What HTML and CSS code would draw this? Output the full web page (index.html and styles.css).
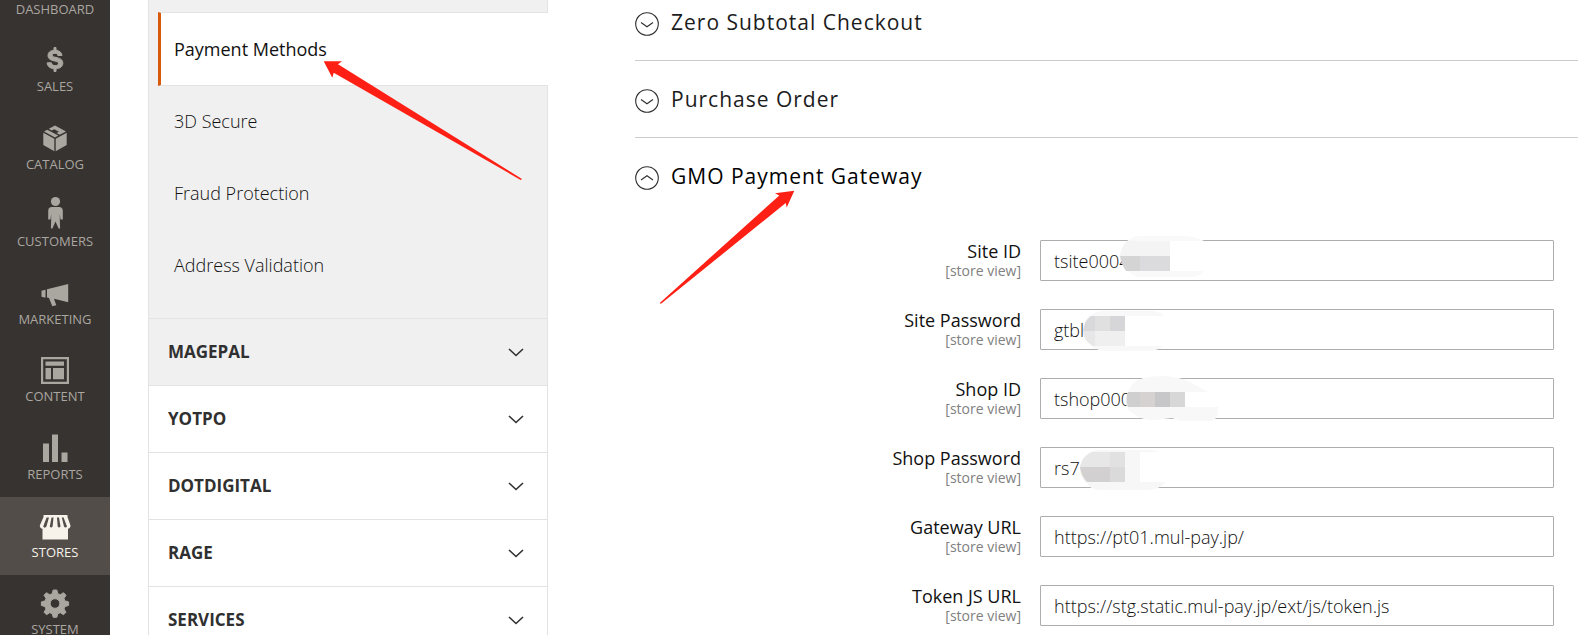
FILE: index.html
```html
<!DOCTYPE html>
<html lang="en">
<head>
<meta charset="utf-8">
<title>Payment Methods Configuration</title>
<link rel="stylesheet" href="styles.css">
</head>
<body>
<div class="page">
  <nav class="menu" aria-label="Main menu">
    <a class="menu-item menu-item-first" href="#"><span>DASHBOARD</span></a>
    <a class="menu-item" href="#">
      <svg class="icon" viewBox="0 0 32 32"><path stroke="currentColor" stroke-width="1" d="M15 3.500h2v2.700c3.600.5 5.800 2.500 6 5.300h-4.200c-.2-1.400-1.200-2.200-2.800-2.200-1.700 0-2.700.7-2.700 1.900 0 1.400 1.400 1.700 3.700 2.200 3.700.8 6.800 1.900 6.800 5.700 0 3.200-2.400 5.300-6.800 5.700v2.700h-2v-2.700c-4.200-.4-6.600-2.600-6.800-6h4.200c.2 1.800 1.500 2.800 3.700 2.800 2 0 3.300-.8 3.300-2.200 0-1.500-1.600-1.900-3.800-2.400C12 16.200 9 15.100 9 11.500c0-3 2.200-4.900 6-5.300z"/></svg>
      <span>SALES</span></a>
    <a class="menu-item" href="#">
      <svg class="icon" viewBox="0 0 32 32"><path d="M4.300 10.800L15.300 16.800V29.300L4.300 23zM16.700 16.800L27.700 10.800V23L16.700 29.300zM5 9.500L8.300 7.700L19.300 13.600L16 15.400zM9.800 6.800L16 3.500L27 9.500L20.800 12.700L17.500 11L20 9.700L15.200 7.200L12.700 8.500z"/></svg>
      <span>CATALOG</span></a>
    <a class="menu-item" href="#">
      <svg class="icon" viewBox="0 0 32 32"><circle cx="16.500" cy="2.500" r="4.600"/><path d="M13 8h7c2.500 0 3.800 1.500 3.800 4v8.500h-2.300L20.800 15v5l.3 9.500h-1.500L16.500 22.500 13.400 29.500h-1.500l.3-9.500v-5l-.7 5.500H9.200V12c0-2.500 1.300-4 3.800-4z"/></svg>
      <span>CUSTOMERS</span></a>
    <a class="menu-item" href="#">
      <svg class="icon" viewBox="0 0 32 32"><path d="M2.500 13.800l4-1v8l-4-1zM8 12.300L29.200 7v18.200L15 21.800l2.300 6.400-4 1.100L10 21 8 20.500z"/></svg>
      <span>MARKETING</span></a>
    <a class="menu-item" href="#">
      <svg class="icon" viewBox="0 0 32 32"><path fill-rule="evenodd" d="M2 3h28v27H2zM4.200 5.200v22.600h23.600V5.200z"/><path d="M6.500 7.500h18.500v4.200H6.500zM6.500 14H12v11.200H6.500zM14 14h11v11.200H14z"/></svg>
      <span>CONTENT</span></a>
    <a class="menu-item" href="#">
      <svg class="icon" viewBox="0 0 32 32"><path d="M4 11.500h6V30H4zM13 2.500h6V30h-6zM22.500 20.500h6V30h-6z"/></svg>
      <span>REPORTS</span></a>
    <a class="menu-item menu-item-active" href="#" aria-current="page">
      <svg class="icon" viewBox="0 0 32 32"><path fill-rule="evenodd" d="M4.500 6h24v2l3 8.500c0 2-1 3-2.500 3.200V30.500H3.500V19.700C1.800 19.500.8 18.500.8 16.500L4.500 8zM7.600 8.500L4.200 17.500c.8 1.500 2.400 1.500 3.200 0L10 8.500zM12.500 8.500L10.800 17.500c.8 1.300 2 1.300 2.800 0L14.500 8.500zM18 8.500l.7 9c.8 1.300 2 1.300 2.800 0l-1.500-9zM22.800 8.500l2.200 9c.8 1.300 2.200 1.300 3 0l-3.400-9z"/></svg>
      <span>STORES</span></a>
    <a class="menu-item" href="#">
      <svg class="icon" viewBox="0 0 32 32"><path fill-rule="evenodd" stroke="currentColor" stroke-linejoin="round" d="M14.200 3h3.600l1 3.700 2.500 1 3.200-2 2.500 2.500-2 3.200 1 2.500 3.600 1v3.600l-3.600 1-1 2.500 2 3.200-2.500 2.500-3.200-2-2.500 1-1 3.600h-3.600l-1-3.600-2.500-1-3.200 2L5 25.200l2-3.200-1-2.500-3.600-1v-3.600l3.600-1 1-2.500-2-3.200 2.500-2.500 3.200 2 2.500-1zM16 11.700a4.800 4.800 0 1 0 0 9.600a4.800 4.800 0 1 0 0-9.600z"/></svg>
      <span>SYSTEM</span></a>
  </nav>

  <aside class="config">
    <div class="config-open">
      <a class="config-link config-link-active" href="#">Payment Methods</a>
      <a class="config-link" href="#">3D Secure</a>
      <a class="config-link" href="#">Fraud Protection</a>
      <a class="config-link" href="#">Address Validation</a>
    </div>
    <button class="config-tab config-tab-hover" type="button">MAGEPAL<svg class="chevron" viewBox="0 0 16 9"><path d="M1 1l7 6.500L15 1"/></svg></button>
    <button class="config-tab" type="button">YOTPO<svg class="chevron" viewBox="0 0 16 9"><path d="M1 1l7 6.500L15 1"/></svg></button>
    <button class="config-tab" type="button">DOTDIGITAL<svg class="chevron" viewBox="0 0 16 9"><path d="M1 1l7 6.500L15 1"/></svg></button>
    <button class="config-tab" type="button">RAGE<svg class="chevron" viewBox="0 0 16 9"><path d="M1 1l7 6.500L15 1"/></svg></button>
    <button class="config-tab" type="button">SERVICES<svg class="chevron" viewBox="0 0 16 9"><path d="M1 1l7 6.500L15 1"/></svg></button>
  </aside>

  <main class="main">
    <button class="section section-first" type="button"><svg class="toggle" viewBox="0 0 24 24"><circle cx="12" cy="12" r="11.300"/><path d="M6 10.500l6 4.300 6-4.300"/></svg>Zero Subtotal Checkout</button>
    <button class="section" type="button"><svg class="toggle" viewBox="0 0 24 24"><circle cx="12" cy="12" r="11.300"/><path d="M6 10.500l6 4.300 6-4.300"/></svg>Purchase Order</button>
    <button class="section section-open" type="button" aria-expanded="true"><svg class="toggle" viewBox="0 0 24 24"><circle cx="12" cy="12" r="11.300"/><path d="M6 14l6-4.300 6 4.300"/></svg>GMO Payment Gateway</button>

    <form class="fields">
      <div class="field">
        <label class="label" for="site-id">Site ID<span class="scope">[store view]</span></label>
        <div class="control"><input class="input" id="site-id" type="text" value="tsite0004">
          <svg class="mask" viewBox="0 -6 200 54">
            <path fill="#f9f9f9" d="M80 16C82 4 88-4 102-4H146Q157-3 164 1V31Q160 37 150 37H100Q88 37 80 16z"/>
            <path fill="#fff" d="M130 1h35v30h-35z"/>
            <path fill="#f4f4f5" d="M80 16C81 8 84 4 87 1H130V16z"/>
            <path fill="#d4d4d5" d="M80 16h20v15H86Q81 24 80 16z"/><path fill="#dbdbdd" d="M100 16h30v15h-30z"/>
          </svg></div>
      </div>
      <div class="field">
        <label class="label" for="site-password">Site Password<span class="scope">[store view]</span></label>
        <div class="control"><input class="input" id="site-password" type="text" value="gtbl">
          <svg class="mask" viewBox="0 -6 200 54">
            <path fill="#f8f8f8" d="M43 20Q44 8 54 4Q60 1 72 2H112Q120 3 123 6V36Q120 42 106 42H68Q58 42 53 38Q43 32 43 20z"/>
            <path fill="#fff" d="M85 7h39v30h-39z"/>
            <path fill="#d9d8da" d="M43 22Q44 12 51 7h4v15z"/><path fill="#e0e0e1" d="M55 7h15v15H55z"/><path fill="#d6d6d9" d="M70 7h15v15H70z"/>
            <path fill="#e7e7e8" d="M43 22h12v15h-2Q44 32 43 22z"/><path fill="#efeff0" d="M55 22h30v15H55z"/>
          </svg></div>
      </div>
      <div class="field">
        <label class="label" for="shop-id">Shop ID<span class="scope">[store view]</span></label>
        <div class="control"><input class="input" id="shop-id" type="text" value="tshop000">
          <svg class="mask" viewBox="0 -6 200 54">
            <path fill="#f8f8f8" d="M86 24Q87 8 98 2Q106-2 124-2Q140-1 150 4L168 14V29H178V35Q177 42 170 43H140L132 40 115 42Q100 42 94 36Q86 32 86 24z"/>
            <path fill="#fff" d="M145 14h34v15h-34z"/>
            <path fill="#cfcfd0" d="M88 14h12v15H88Q85 21 88 14z"/><path fill="#d5d2d1" d="M100 14h15v15h-15z"/><path fill="#c7c6c9" d="M115 14h15v15h-15z"/><path fill="#d7d7d8" d="M130 14h15v15h-15z"/>
          </svg></div>
      </div>
      <div class="field">
        <label class="label" for="shop-password">Shop Password<span class="scope">[store view]</span></label>
        <div class="control"><input class="input" id="shop-password" type="text" value="rs7r">
          <svg class="mask" viewBox="0 -6 200 54">
            <path fill="#f7f7f7" d="M40 21Q42 6 56 3H104Q116 3 120 5L125 35Q120 43 106 43H60Q50 43 47 36Q40 32 40 21z"/>
            <path fill="#fff" d="M100 5h26v30h-26z"/>
            <path fill="#e7e7e8" d="M40 20Q42 9 52 5H70V20z"/><path fill="#e1e1e2" d="M70 5h15v15H70z"/>
            <path fill="#d2d0d0" d="M40 20H70V35H47Q41 29 40 20z"/><path fill="#dadadb" d="M70 20h15v15H70z"/>
          </svg></div>
      </div>
      <div class="field">
        <label class="label" for="gateway-url">Gateway URL<span class="scope">[store view]</span></label>
        <div class="control"><input class="input" id="gateway-url" type="text" value="https://pt01.mul-pay.jp/"></div>
      </div>
      <div class="field">
        <label class="label" for="token-url">Token JS URL<span class="scope">[store view]</span></label>
        <div class="control"><input class="input" id="token-url" type="text" value="https://stg.static.mul-pay.jp/ext/js/token.js"></div>
      </div>
    </form>
  </main>

  <svg class="arrows" width="900" height="320" viewBox="0 0 900 320">
    <path d="M323.700 61.300H342L338 64.300 522 179 520.700 180 333.700 72.700 332.300 77.700z"/>
    <path d="M794.300 190.700L775 193.300 779.300 195.500 660 302.700 660.700 304 785.700 203 786.700 207.500z"/>
  </svg>
</div>
</body>
</html>
```
FILE: styles.css
```css
* {
  box-sizing: border-box;
}

body {
  margin: 0;
  height: 100vh;
  overflow: hidden;
  background: #fff;
  color: #303030;
  font-family: "Open Sans", "Noto Sans", sans-serif;
  font-size: 18px;
  line-height: 24px;
}

button,
input {
  font: inherit;
  color: inherit;
}

a {
  color: inherit;
  text-decoration: none;
}

.page {
  position: relative;
  display: flex;
  min-height: 100vh;
}

/* Main menu */
.menu {
  flex: none;
  width: 110px;
  background: #373330;
  color: #aaa6a0;
  font-size: 13px;
  line-height: 16px;
}

.menu-item {
  display: flex;
  flex-direction: column;
  align-items: center;
  gap: 2px;
  height: 78px;
  padding-top: 12px;
}

.menu-item:nth-child(odd) {
  height: 77px;
}

.menu-item.menu-item-first {
  height: 32px;
  padding-top: 1px;
}

.menu-item-active {
  gap: 3px;
  background: #524d49;
  color: #f7f3eb;
  font-weight: 500;
}

.icon {
  width: 32px;
  height: 32px;
  overflow: visible;
  fill: currentColor;
}

/* Configuration tabs */
.config {
  flex: none;
  width: 400px;
  margin-left: 38px;
}

.config-open {
  padding: 12px 0 16px 9px;
  border: solid #e3e3e3;
  border-width: 0 1px;
  background: #f0f0f0;
}

.config-link {
  display: flex;
  align-items: center;
  height: 72px;
  padding: 0 0 3px 16px;
  color: #111;
  font-weight: 300;
}

.config-link-active {
  height: 74px;
  margin-right: -1px;
  padding: 0 0 0 13px;
  border: 1px solid #e3e3e3;
  border-left: 3px solid #d85909;
  border-right: 0;
  background: #fff;
  font-weight: 500;
}

.config-tab {
  display: flex;
  align-items: center;
  justify-content: space-between;
  width: 100%;
  height: 67px;
  padding: 0 23px 0 19px;
  border: 1px solid #e3e3e3;
  border-bottom: 0;
  background: #fff;
  font-size: 17px;
  font-weight: 700;
}

.config-tab-hover {
  background: #f0f0f0;
}

.chevron {
  width: 16px;
  height: 9px;
  fill: none;
  stroke: #303030;
  stroke-width: 1.6;
}

/* Payment sections */
.main {
  flex: 1;
  margin-left: 87px;
}

.section {
  display: flex;
  align-items: center;
  gap: 12px;
  width: 100%;
  height: 77px;
  padding: 0;
  border: 0;
  border-bottom: 1px solid #ccc;
  background: none;
  color: #1c1c1c;
  font-size: 21px;
  font-weight: 500;
  letter-spacing: 1px;
}

.section-first {
  height: 61px;
  padding-bottom: 16px;
}

.section-open {
  border-bottom-color: transparent;
  color: #000;
}

.toggle {
  width: 24px;
  height: 24px;
  margin-top: 3px;
  fill: none;
  stroke: #303030;
  stroke-width: 1.1;
}

.fields {
  display: grid;
  gap: 28px;
  padding: 25px 24px 0 0;
}

.field {
  display: grid;
  grid-template-columns: 386px 1fr;
  column-gap: 19px;
}

.label {
  color: #111;
  font-weight: 500;
  line-height: 23px;
  text-align: right;
}

.scope {
  display: block;
  color: #808080;
  font-size: 14px;
  font-weight: 400;
  line-height: 16px;
}

.control {
  position: relative;
}

.input {
  display: block;
  width: 100%;
  height: 41px;
  padding: 0 13px;
  border: 1px solid #adadad;
  border-radius: 1px;
  background: #fff;
  color: #111;
  font-weight: 300;
}

.mask {
  position: absolute;
  top: -6px;
  left: 0;
  width: 200px;
  height: 54px;
}

/* Callout arrows */
.arrows {
  position: absolute;
  top: 0;
  left: 0;
  fill: #ff2015;
  pointer-events: none;
}
```
